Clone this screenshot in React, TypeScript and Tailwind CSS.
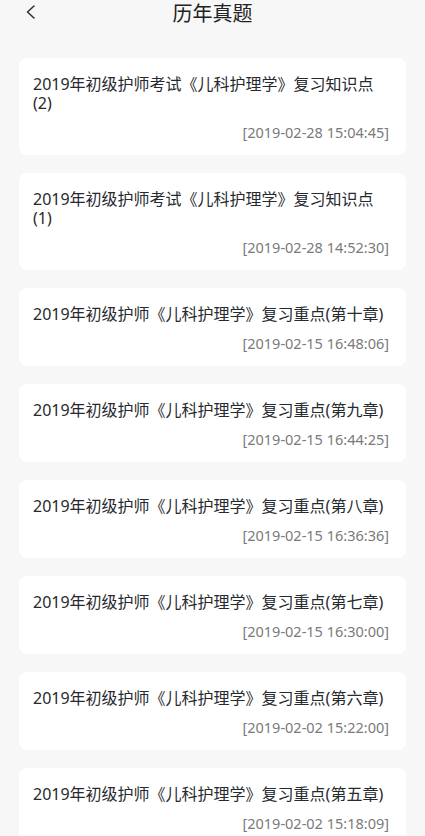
import React from "react";

const items = [
  { t: "2019年初级护师考试《儿科护理学》复习知识点(2)", d: "[2019-02-28 15:04:45]" },
  { t: "2019年初级护师考试《儿科护理学》复习知识点(1)", d: "[2019-02-28 14:52:30]" },
  { t: "2019年初级护师《儿科护理学》复习重点(第十章)", d: "[2019-02-15 16:48:06]" },
  { t: "2019年初级护师《儿科护理学》复习重点(第九章)", d: "[2019-02-15 16:44:25]" },
  { t: "2019年初级护师《儿科护理学》复习重点(第八章)", d: "[2019-02-15 16:36:36]" },
  { t: "2019年初级护师《儿科护理学》复习重点(第七章)", d: "[2019-02-15 16:30:00]" },
  { t: "2019年初级护师《儿科护理学》复习重点(第六章)", d: "[2019-02-02 15:22:00]" },
  { t: "2019年初级护师《儿科护理学》复习重点(第五章)", d: "[2019-02-02 15:18:09]" },
];

export default function App() {
  return (
    <div
      className="w-[425px] h-[836px] overflow-hidden bg-[#f7f7f7]"
      style={{ fontFamily: '"Noto Sans", "Noto Sans CJK SC", sans-serif' }}
    >
      <div className="relative h-[28px] flex items-center justify-center">
        <svg
          className="absolute left-[24px] top-[4px]"
          width="14"
          height="16"
          viewBox="0 0 14 16"
          fill="none"
          stroke="#333"
          strokeWidth="1.6"
          strokeLinecap="round"
          strokeLinejoin="round"
        >
          <path d="M10 2 L3.5 8 L10 14" />
        </svg>
        <div className="text-[20px] leading-[28px] text-[#222]">历年真题</div>
      </div>
      <div className="flex flex-col gap-[18px] px-[19px] pt-[30px]">
        {items.map((it, i) => (
          <div key={i} className="bg-white rounded-[8px] pl-[14px] pr-[17px] pt-[17px] pb-[14px]">
            <div className="text-[16px] leading-[19px] text-[#26292e]">{it.t}</div>
            <div className="mt-[10px] text-right text-[14.5px] leading-[18px] text-[#7a7a7a]">{it.d}</div>
          </div>
        ))}
      </div>
    </div>
  );
}
